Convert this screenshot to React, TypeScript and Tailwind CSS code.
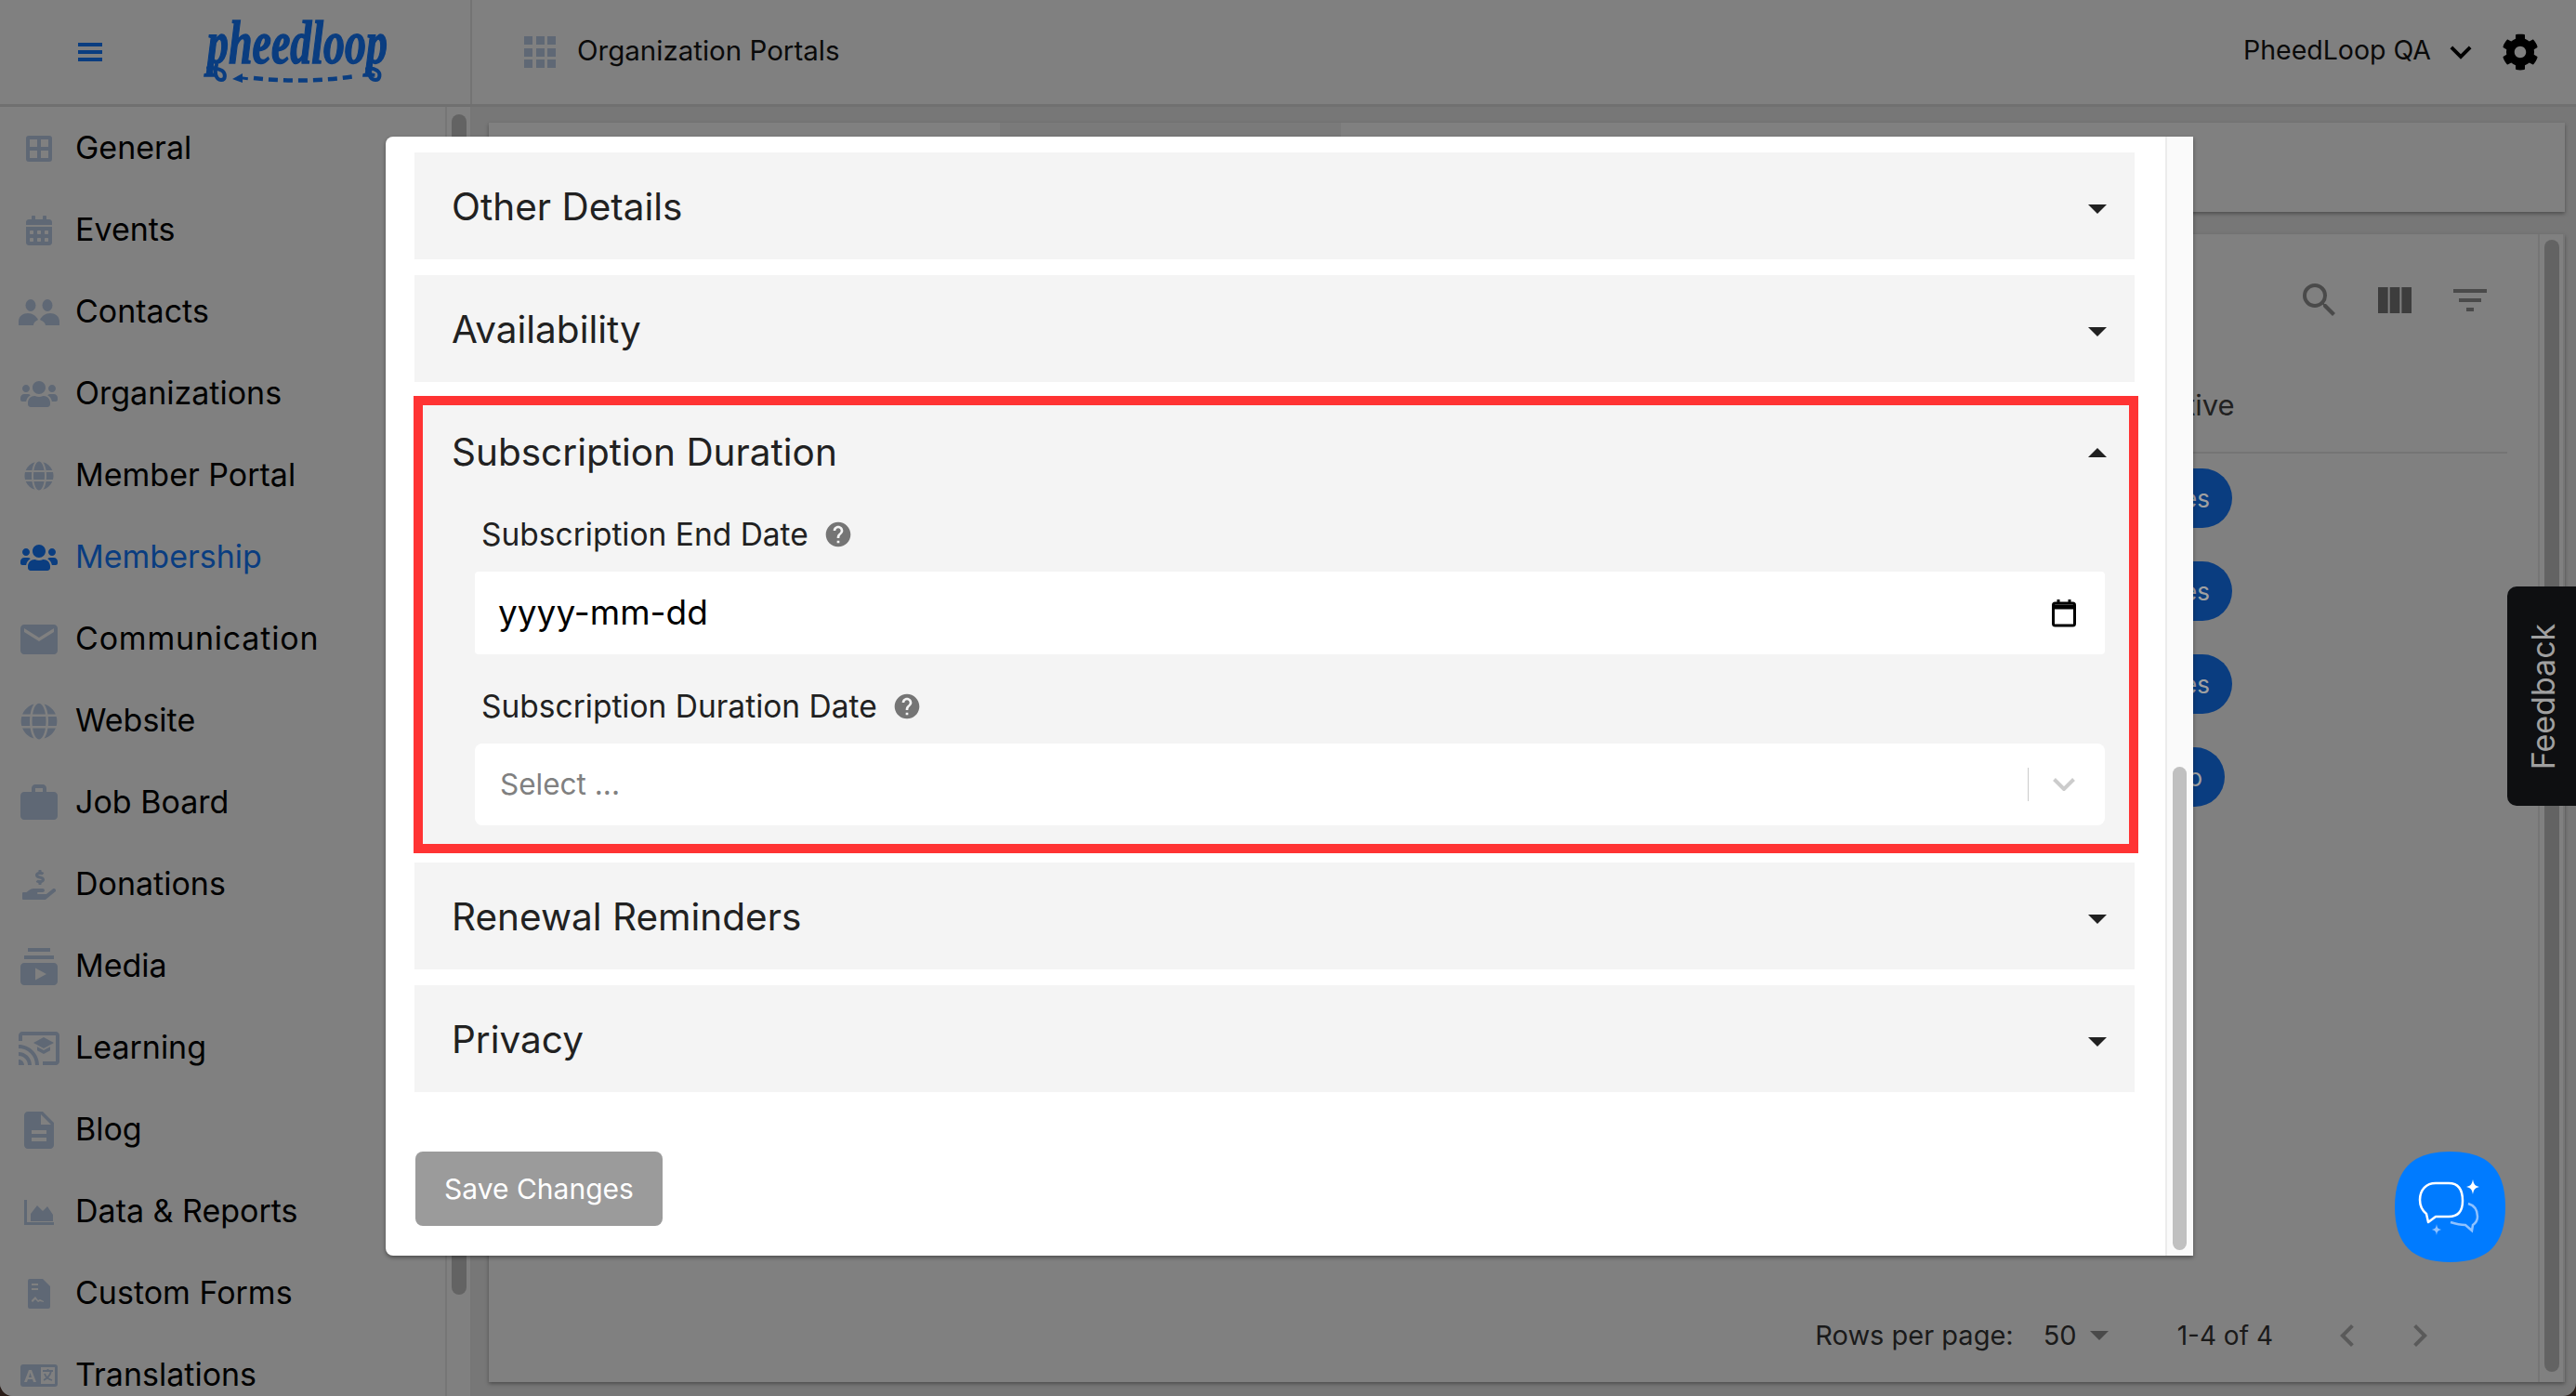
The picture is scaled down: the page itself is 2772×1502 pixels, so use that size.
import type { ReactNode } from 'react'
import {
  MdCastForEducation,
  MdChevronLeft,
  MdChevronRight,
  MdDescription,
  MdEmail,
  MdFilterList,
  MdHelp,
  MdKeyboardArrowDown,
  MdSearch,
  MdSubscriptions,
  MdViewColumn,
  MdWork,
} from 'react-icons/md'
import { FaCalendarAlt, FaCog, FaGlobe, FaHandHoldingUsd, FaUsers } from 'react-icons/fa'

function GeneralIcon() {
  return (
    <svg viewBox="0 0 28 28" className="h-[28px] w-[28px]" fill="currentColor">
      <path fillRule="evenodd" d="M3 0h22a3 3 0 0 1 3 3v22a3 3 0 0 1-3 3H3a3 3 0 0 1-3-3V3a3 3 0 0 1 3-3zm1 4v8h8V4zm12 0v8h8V4zM4 16v8h8v-8zm12 0v8h8v-8z" />
    </svg>
  )
}

function ContactsIcon() {
  return (
    <svg viewBox="0 0 44 28" className="h-[28px] w-[44px]" fill="currentColor">
      <ellipse cx="13" cy="6.500" rx="5.500" ry="6.500" />
      <ellipse cx="31" cy="6.500" rx="5.500" ry="6.500" />
      <path d="M0 28v-4c0-6 5-9 10-9 5 0 9 3 11 7-2 1-5 3-5 6z" />
      <path d="M44 28v-4c0-6-5-9-10-9-5 0-9 3-11 7 2 1 6 3 6 6z" />
    </svg>
  )
}

function DataReportsIcon() {
  return (
    <svg viewBox="0 0 32 27" className="h-[27px] w-[32px]" fill="currentColor">
      <path d="M1.500 0v25.500H32" fill="none" stroke="currentColor" strokeWidth="3" />
      <path d="M7 23v-8l7-9 6 6 5-5 6 9v7z" />
    </svg>
  )
}

function CustomFormsIcon() {
  return (
    <svg viewBox="0 0 24 32" className="h-[32px] w-[24px]" fill="currentColor">
      <path fillRule="evenodd" d="M2 0h14l8 8v22a2 2 0 0 1-2 2H2a2 2 0 0 1-2-2V2a2 2 0 0 1 2-2zm2 5v2h7V5zm0 5v2h7v-2zm0 14 1 1 3-3 3 3 2-1 4 1v-1l-4-2-2 1-3-4-4 4z" />
    </svg>
  )
}

function TranslationsIcon() {
  return (
    <svg viewBox="0 0 40 24" className="h-[24px] w-[40px]" fill="currentColor">
      <rect width="40" height="24" rx="3" />
      <path d="M22 3h15v18H22z" fill="#808080" />
      <path d="M9 6h3l5 13h-3l-1-3H8l-1 3H4zm1.500 3L9 14h3z" fill="#808080" />
      <path d="M24 7h11M29.500 5v2M33 7c-1 5-4 8-8 10M26 10c1 3 4 6 8 7" stroke="currentColor" strokeWidth="1.800" fill="none" />
    </svg>
  )
}

const navItems: { label: string; icon: ReactNode; active?: boolean; textClass?: string }[] = [
  { label: 'General', icon: <GeneralIcon /> },
  { label: 'Events', icon: <FaCalendarAlt className="h-[32px] w-[28px]" /> },
  { label: 'Contacts', icon: <ContactsIcon /> },
  { label: 'Organizations', icon: <FaUsers className="h-[32px] w-[40px]" /> },
  { label: 'Member Portal', icon: <FaGlobe className="h-[32px] w-[32px]" /> },
  { label: 'Membership', icon: <FaUsers className="h-[32px] w-[40px]" />, active: true },
  { label: 'Communication', icon: <MdEmail className="h-[48px] w-[48px]" />, textClass: 'tracking-[0.8px]' },
  { label: 'Website', icon: <FaGlobe className="h-[40px] w-[40px]" /> },
  { label: 'Job Board', icon: <MdWork className="h-[48px] w-[48px]" /> },
  { label: 'Donations', icon: <FaHandHoldingUsd className="h-[36px] w-[36px]" /> },
  { label: 'Media', icon: <MdSubscriptions className="h-[48px] w-[48px]" /> },
  { label: 'Learning', icon: <MdCastForEducation className="h-[48px] w-[48px]" /> },
  { label: 'Blog', icon: <MdDescription className="h-[48px] w-[48px]" /> },
  { label: 'Data & Reports', icon: <DataReportsIcon /> },
  { label: 'Custom Forms', icon: <CustomFormsIcon /> },
  { label: 'Translations', icon: <TranslationsIcon /> },
]

function Logo() {
  return (
    <svg viewBox="0 0 200 76" className="h-[76px] w-[200px] overflow-visible text-[#0a3d80]" fill="currentColor">
      <text
        x="3"
        y="50"
        fontSize="66"
        fontStyle="italic"
        fontWeight="700"
        fontFamily="'Liberation Serif', serif"
        stroke="currentColor"
        strokeWidth="1.500"
        textLength="194"
        lengthAdjust="spacingAndGlyphs"
      >
        pheedloop
      </text>
      {/* curled tails of the two p's */}
      <path d="M13 52c-3 6-1 16 5 16 5 0 5-7 1-10-4-2-10-3-15-3" fill="none" stroke="currentColor" strokeWidth="4" strokeLinecap="round" />
      <path d="M178 50c-3 7-1 18 6 18 5 0 6-7 2-10-3-2-7-3-11-2" fill="none" stroke="currentColor" strokeWidth="4" strokeLinecap="round" />
      <path d="M30 67l11-6v3.500l6 .8-.4 3-5.600-.8V71z" />
      <path d="M53 66q55 6 110-2" fill="none" stroke="currentColor" strokeWidth="4.500" strokeDasharray="10 6" />
    </svg>
  )
}

function Triangle({ up = false }: { up?: boolean }) {
  return (
    <svg viewBox="0 0 20 10" className={`h-[10px] w-[20px] text-[#212121] ${up ? '' : 'mt-[3px]'}`} fill="currentColor">
      <path d={up ? 'M0 10 10 0l10 10z' : 'M0 0h20L10 10z'} />
    </svg>
  )
}

function AccordionHeader({ title, open = false }: { title: string; open?: boolean }) {
  return (
    <div className="flex h-[115px] items-center justify-between pl-[40px] pr-[30px] pt-[3px]">
      <span className="text-[40.5px] text-[#212121]">{title}</span>
      <Triangle up={open} />
    </div>
  )
}

function Collapsed({ title }: { title: string }) {
  return (
    <div className="bg-[#f4f4f4]">
      <AccordionHeader title={title} />
    </div>
  )
}

function FieldLabel({ text }: { text: string }) {
  return (
    <div className="mb-[8px] flex h-[64px] items-center gap-[16px] pl-[7px] text-[33.5px] text-[#212121]">
      <span>{text}</span>
      <MdHelp className="h-[32px] w-[32px] text-[#757575]" />
    </div>
  )
}

function SubscriptionDuration() {
  return (
    <div className="relative">
      <div className="bg-[#f4f4f4] pb-[23px]">
        <AccordionHeader title="Subscription Duration" open />
        <div className="pl-[65px] pr-[32px]">
          <FieldLabel text="Subscription End Date" />
          <div className="flex h-[89px] items-center justify-between rounded-[4px] bg-white pl-[25px] pr-[31px]">
            <span className="-mt-[2px] text-[37px] text-black">yyyy-mm-dd</span>
            <svg viewBox="0 0 26 30" className="h-[30px] w-[26px] text-black" fill="none" stroke="currentColor">
              <rect x="1.500" y="4" width="23" height="24" rx="2" strokeWidth="3" />
              <path d="M1.500 8h23" strokeWidth="5" />
              <path d="M7 0v4M19 0v4" strokeWidth="3" />
            </svg>
          </div>
          <div className="mt-[24px]">
            <FieldLabel text="Subscription Duration Date" />
          </div>
          <div className="flex h-[88px] items-center rounded-[8px] bg-white pl-[27px] pr-[32px]">
            <span className="flex-1 text-[31.5px] text-[#808080]">Select ...</span>
            <div className="mr-[26px] h-[36px] w-px bg-[#cccccc]" />
            <svg viewBox="0 0 24 14" className="h-[14px] w-[24px] text-[#cccccc]" fill="none" stroke="currentColor" strokeWidth="4">
              <path d="M1.500 1.500 12 12 22.500 1.500" />
            </svg>
          </div>
        </div>
      </div>
      {/* red annotation drawn over the open section */}
      <div className="absolute bottom-[-7px] left-[-1px] right-[-4px] top-[-2px] border-[10px] border-[#ff3333]" />
    </div>
  )
}

function Modal() {
  return (
    <div className="absolute left-[415px] top-[147px] flex h-[1204px] w-[1945px] rounded-l-[8px] bg-white shadow-[0_2px_4px_rgba(0,0,0,0.4)]">
      <div className="flex-1 pl-[31px] pr-[33px] pt-[17px]">
        <div className="flex flex-col gap-[17px]">
          <Collapsed title="Other Details" />
          <Collapsed title="Availability" />
          <SubscriptionDuration />
          <Collapsed title="Renewal Reminders" />
          <Collapsed title="Privacy" />
        </div>
        <button className="ml-[1px] mt-[64px] h-[80px] w-[266px] rounded-[8px] bg-[#9b9b9b] text-[30px] text-white">Save Changes</button>
      </div>
      <div className="flex h-full w-[30px] flex-col justify-end border-l-2 border-[#ececec] bg-[#fafafa] pb-[6px] pl-[6px]">
        <div className="h-[520px] w-[15px] rounded-full bg-[#c0c0c0]" />
      </div>
    </div>
  )
}

function ChatButton() {
  return (
    <svg viewBox="0 0 119 119" className="absolute left-[2577px] top-[1239px] h-[119px] w-[119px]">
      <path d="M59.500 0C100 0 119 19 119 59.500S100 119 59.500 119 0 100 0 59.500 19 0 59.500 0z" fill="#007bff" />
      <path
        d="M44 34h14c10 0 15 6 15 19s-6 17-15 17H44l-8 6-2-9c-5-4-7-8-7-15 0-11 7-18 17-18z"
        fill="none"
        stroke="white"
        strokeWidth="2.500"
        strokeLinejoin="round"
      />
      <path d="M84 30c1 5 2 7 7 8-5 1-6 3-7 8-1-5-2-7-7-8 5-1 6-3 7-8z" fill="white" />
      <path d="M79 56c7 2 10 7 10 14 0 4-2 7-5 9l-1 6-7-6c-6 0-10-1-16-3" fill="none" stroke="#8fc2ff" strokeWidth="2.500" />
      <path d="M45 78c.6 4 1.400 5 5 6-3.600 1-4.400 2-5 6-.6-4-1.400-5-5-6 3.600-1 4.400-2 5-6z" fill="#8fc2ff" />
    </svg>
  )
}

function StatusRow({ label, pill }: { label: string; pill: string }) {
  return (
    <div className="flex h-[100px] items-center">
      <div className={`flex h-[64px] items-center justify-end rounded-full bg-[#0a3d80] pr-[24px] text-[26px] text-[#a0a0a0] ${pill}`}>
        {label}
      </div>
    </div>
  )
}

export default function App() {
  return (
    <div className="h-[1502px] w-[2772px] overflow-hidden bg-[#2a1d18] [font-family:Inter,sans-serif]">
      <div className="relative flex h-full flex-col overflow-hidden rounded-b-[14px] bg-[#777777]">
        <header className="flex h-[115px] shrink-0 items-center border-b-[3px] border-[#707070] bg-[#808080]">
          <div className="flex h-full w-[508px] shrink-0 items-center border-r-2 border-[#747474] pl-[84px]">
            <div className="flex h-[20px] w-[26px] flex-col justify-between">
              <div className="h-[4px] bg-[#0a3d80]" />
              <div className="h-[4px] bg-[#0a3d80]" />
              <div className="h-[4px] bg-[#0a3d80]" />
            </div>
            <div className="ml-[110px]">
              <Logo />
            </div>
          </div>
          <div className="ml-[56px] grid grid-cols-3 gap-[3.5px]">
            {Array.from({ length: 9 }).map((_, i) => (
              <div key={i} className="h-[9px] w-[9px] bg-[#5f6875]" />
            ))}
          </div>
          <span className="-mt-[4px] ml-[23px] flex-1 text-[29.5px] text-[#0a0a0a]">Organization Portals</span>
          <span className="-mt-[4px] text-[28.5px] text-[#0a0a0a]">PheedLoop QA</span>
          <MdKeyboardArrowDown className="ml-[9px] h-[46px] w-[46px] text-black" />
          <FaCog className="ml-[21px] mr-[40px] h-[40px] w-[40px] text-black" />
        </header>

        <div className="flex min-h-0 flex-1">
          <aside className="flex w-[508px] shrink-0 bg-[#808080]">
            <nav className="flex flex-1 flex-col overflow-hidden pt-[1px]">
              {navItems.map((item) => (
                <div
                  key={item.label}
                  className={`flex h-[88px] shrink-0 items-center text-[34px] ${item.active ? 'text-[#0a3d80]' : 'text-black'}`}
                >
                  <div className={`flex w-[81px] shrink-0 justify-center pl-[2px] ${item.active ? 'text-[#0a3d80]' : 'text-[#5f6875]'}`}>{item.icon}</div>
                  <span className={`-mt-[3px] ${item.textClass ?? ''}`}>{item.label}</span>
                </div>
              ))}
            </nav>
            <div className="w-[29px] shrink-0 border-x-2 border-[#767676] pl-[5px] pt-[8px]">
              <div className="h-[1270px] w-[16px] rounded-full bg-[#636363]" />
            </div>
          </aside>

          <main className="flex min-w-0 flex-1 flex-col gap-[24px] pb-[15px] pl-[18px] pr-[12px] pt-[17px]">
            <div className="flex h-[96px] shrink-0 bg-[#808080] shadow-[0_2px_4px_rgba(0,0,0,0.35)]">
              <div className="w-[550px]" />
              <div className="w-[367px] bg-[#7a7a7a]" />
            </div>
            <div className="flex min-h-0 flex-1 bg-[#808080] shadow-[0_2px_4px_rgba(0,0,0,0.35)]">
              <div className="flex min-w-0 flex-1 flex-col">
                <div className="flex h-[122px] items-center justify-end gap-[33px] pr-[49px] pt-[20px] text-[#3d3d3d]">
                  <MdSearch className="h-[48px] w-[48px] text-[#4a4a4a]" />
                  <MdViewColumn className="h-[48px] w-[48px]" />
                  <MdFilterList className="h-[48px] w-[48px] text-[#4a4a4a]" />
                </div>
                <div className="ml-auto mr-[33px] flex h-[114px] w-[398px] items-center border-b-2 border-[#747474] pl-[13px] pt-[12px] text-[31px] text-[#212121]">
                  Active
                </div>
                <div className="-mt-[2px] ml-auto mr-[33px] w-[398px]">
                  <StatusRow label="Yes" pill="w-[102px]" />
                  <StatusRow label="Yes" pill="w-[102px]" />
                  <StatusRow label="Yes" pill="w-[102px]" />
                  <StatusRow label="No" pill="w-[94px]" />
                </div>
                <div className="mt-auto flex h-[100px] items-center justify-end pr-[103px] text-[29px] text-[#1a1a1a]">
                  <span>Rows per page:</span>
                  <span className="ml-[32px]">50</span>
                  <svg viewBox="0 0 20 10" className="ml-[14px] h-[10px] w-[20px] text-[#4a4a4a]" fill="currentColor">
                    <path d="M0 0h20L10 10z" />
                  </svg>
                  <span className="ml-[74px] text-[28px]">1-4 of 4</span>
                  <MdChevronLeft className="ml-[56px] h-[48px] w-[48px] text-[#5a5a5a]" />
                  <MdChevronRight className="ml-[30px] h-[48px] w-[48px] text-[#5a5a5a]" />
                </div>
              </div>
              <div className="w-[29px] shrink-0 border-x-2 border-[#767676] pl-[5px] pt-[6px]">
                <div className="h-[1218px] w-[16px] rounded-full bg-[#636363]" />
              </div>
            </div>
          </main>
        </div>

        <Modal />
        <ChatButton />

        <div className="absolute left-[2698px] top-[631px] flex h-[236px] w-[74px] items-center justify-center rounded-l-[10px] bg-[#0e0f11] pl-[3px]">
          <span className="-rotate-90 text-[34px] text-[#a0a0a0]">Feedback</span>
        </div>
      </div>
    </div>
  )
}
